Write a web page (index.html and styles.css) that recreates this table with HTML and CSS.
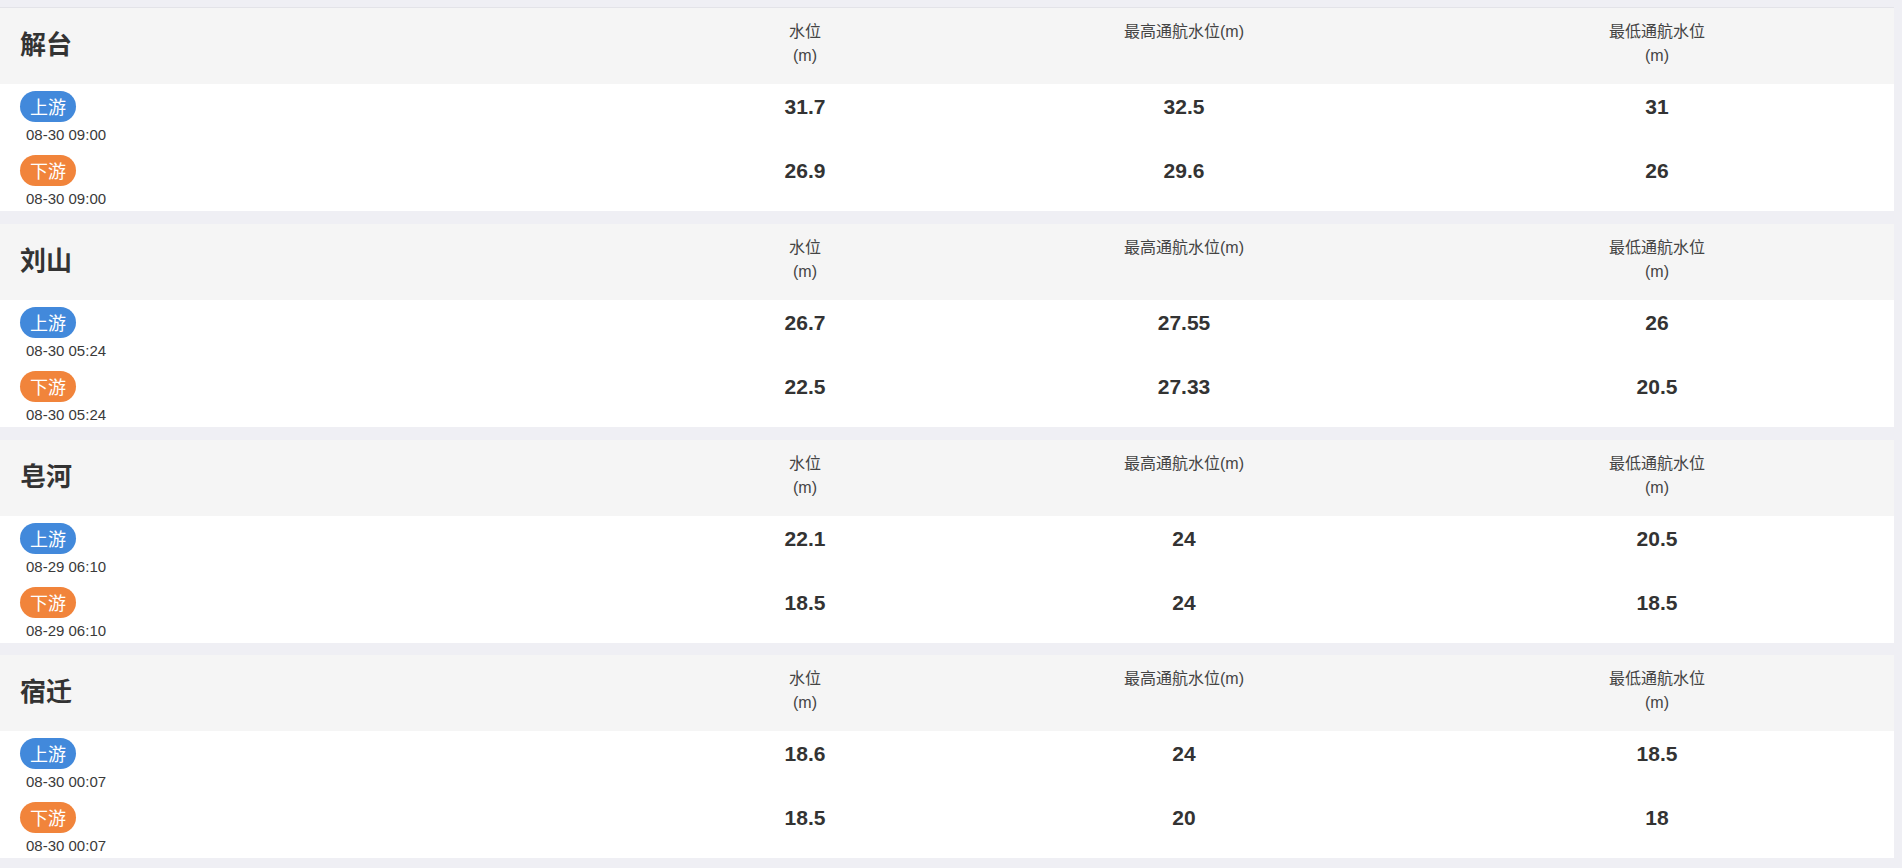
FILE: index.html
```html
<!DOCTYPE html>
<html lang="zh-CN">
<head>
<meta charset="utf-8">
<title>水位</title>
<link rel="stylesheet" href="styles.css">
</head>
<body>
<div class="page">
  <div class="list">

    <section class="card">
      <div class="head">
        <div class="name">解台</div>
        <div class="col">水位<br>(m)</div>
        <div class="col">最高通航水位(m)</div>
        <div class="col">最低通航水位<br>(m)</div>
      </div>
      <div class="body">
        <div class="row">
          <div class="station"><span class="tag up">上游</span><div class="time">08-30 09:00</div></div>
          <div class="val">31.7</div><div class="val">32.5</div><div class="val">31</div>
        </div>
        <div class="row">
          <div class="station"><span class="tag down">下游</span><div class="time">08-30 09:00</div></div>
          <div class="val">26.9</div><div class="val">29.6</div><div class="val">26</div>
        </div>
      </div>
    </section>

    <section class="card">
      <div class="head">
        <div class="name">刘山</div>
        <div class="col">水位<br>(m)</div>
        <div class="col">最高通航水位(m)</div>
        <div class="col">最低通航水位<br>(m)</div>
      </div>
      <div class="body">
        <div class="row">
          <div class="station"><span class="tag up">上游</span><div class="time">08-30 05:24</div></div>
          <div class="val">26.7</div><div class="val">27.55</div><div class="val">26</div>
        </div>
        <div class="row">
          <div class="station"><span class="tag down">下游</span><div class="time">08-30 05:24</div></div>
          <div class="val">22.5</div><div class="val">27.33</div><div class="val">20.5</div>
        </div>
      </div>
    </section>

    <section class="card">
      <div class="head">
        <div class="name">皂河</div>
        <div class="col">水位<br>(m)</div>
        <div class="col">最高通航水位(m)</div>
        <div class="col">最低通航水位<br>(m)</div>
      </div>
      <div class="body">
        <div class="row">
          <div class="station"><span class="tag up">上游</span><div class="time">08-29 06:10</div></div>
          <div class="val">22.1</div><div class="val">24</div><div class="val">20.5</div>
        </div>
        <div class="row">
          <div class="station"><span class="tag down">下游</span><div class="time">08-29 06:10</div></div>
          <div class="val">18.5</div><div class="val">24</div><div class="val">18.5</div>
        </div>
      </div>
    </section>

    <section class="card">
      <div class="head">
        <div class="name">宿迁</div>
        <div class="col">水位<br>(m)</div>
        <div class="col">最高通航水位(m)</div>
        <div class="col">最低通航水位<br>(m)</div>
      </div>
      <div class="body">
        <div class="row">
          <div class="station"><span class="tag up">上游</span><div class="time">08-30 00:07</div></div>
          <div class="val">18.6</div><div class="val">24</div><div class="val">18.5</div>
        </div>
        <div class="row">
          <div class="station"><span class="tag down">下游</span><div class="time">08-30 00:07</div></div>
          <div class="val">18.5</div><div class="val">20</div><div class="val">18</div>
        </div>
      </div>
    </section>

  </div>
</div>
</body>
</html>
```

FILE: styles.css
```css
html, body {
  margin: 0;
  padding: 0;
  background: #efeff4;
}
body {
  font-family: "Liberation Sans", Arial, "Noto Sans CJK SC", sans-serif;
  color: #333;
}
.page {
  padding: 7px 8px 0 0;
}
.list {
  border-top: 1px solid #e3e3e8;
  display: flex;
  flex-direction: column;
  gap: 12.8px;
}
.card {
  background: #fff;
}
.head,
.row {
  display: grid;
  grid-template-columns: 662px 286px 472px 1fr;
}
.head {
  background: #f5f5f5;
  height: 76px;
  box-sizing: border-box;
  padding-top: 12px;
}
.name {
  align-self: center;
  margin-top: -19px;
  padding-left: 20px;
  font-size: 26px;
  font-weight: bold;
  font-family: "Noto Sans CJK SC", sans-serif;
  color: #333;
}
.col {
  text-align: center;
  font-size: 16px;
  line-height: 24px;
  color: #444;
  white-space: nowrap;
  font-family: "Liberation Sans", "Noto Sans CJK SC", sans-serif;
}
.body {
  height: 127px;
  box-sizing: border-box;
  padding-top: 7px;
  display: flex;
  flex-direction: column;
  gap: 10px;
}
.station {
  padding-left: 20px;
}
.tag {
  display: inline-block;
  height: 31px;
  line-height: 31px;
  padding: 0 10px;
  border-radius: 16px;
  color: #fff;
  font-size: 18px;
  font-family: "Noto Sans CJK SC", sans-serif;
  font-weight: 400;
}
.tag.up {
  background: #4289db;
}
.tag.down {
  background: #f1843b;
}
.time {
  margin-top: 3px;
  padding-left: 6px;
  font-size: 15px;
  line-height: 20px;
  color: #3a3a3a;
}
.val {
  text-align: center;
  line-height: 31px;
  font-size: 21px;
  font-weight: bold;
  color: #333;
  white-space: nowrap;
}
```
